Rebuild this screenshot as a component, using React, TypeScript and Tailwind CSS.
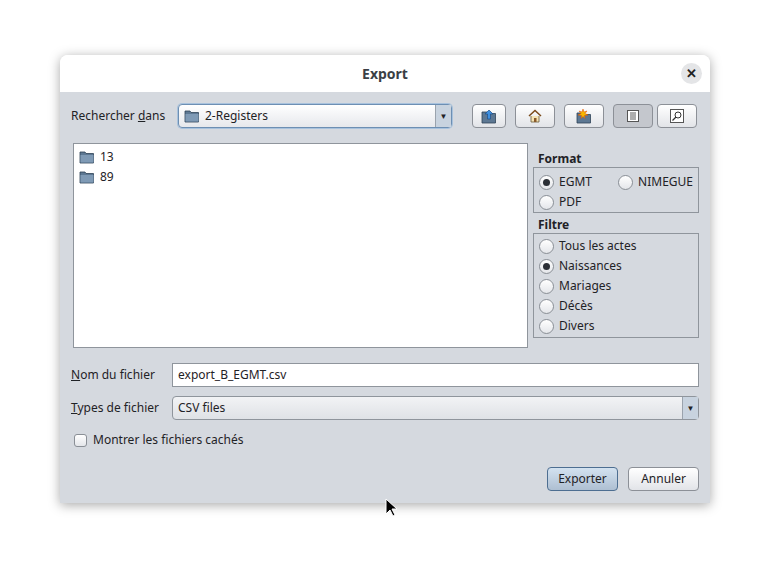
import React from "react";

const Folder = () => (
  <svg width="16" height="14" viewBox="0 0 16 14">
    <path d="M1 2h5l1 1.5h7.5v9.5H1z" fill="#5d7893" stroke="#2f4257" strokeWidth="0.8" />
    <path d="M1.5 5h13v7.5h-13z" fill="#7f9ab5" />
  </svg>
);

const Radio = ({ on }: { on?: boolean }) => (
  <span className="w-[15px] h-[15px] rounded-full border border-[#8a8f96] bg-gradient-to-b from-white to-[#e4e6ea] flex items-center justify-center shrink-0">
    {on && <span className="w-[7px] h-[7px] rounded-full bg-[#2b2f36]" />}
  </span>
);

const TB = ({ children, active }: { children: React.ReactNode; active?: boolean }) => (
  <div className={`h-[24px] rounded-[4px] border border-[#8c9097] flex items-center justify-center ${active ? "bg-[#c4c7cd]" : "bg-gradient-to-b from-white to-[#e2e4e8]"}`}>{children}</div>
);

export default function App() {
  return (
    <div className="w-[771px] h-[571px] bg-white relative" style={{ fontFamily: '"Noto Sans", sans-serif' }}>
      <div className="absolute left-[60px] top-[55px] w-[650px] h-[448px] rounded-t-[8px] overflow-hidden shadow-[0_2px_12px_rgba(0,0,0,0.35)] flex flex-col">
        <div className="h-[37px] bg-white flex items-center justify-center relative shrink-0">
          <span className="text-[14px] font-bold text-[#3b3f45]">Export</span>
          <span className="absolute right-[8px] top-[8px] w-[21px] h-[21px] rounded-full bg-[#e4e5e7] flex items-center justify-center text-[13px] font-bold text-[#222]">✕</span>
        </div>
        <div className="flex-1 bg-[#d5d9df] px-[11px] pt-[12px] text-[12px] text-[#1f2226]">
          <div className="flex items-center h-[24px]">
            <span className="w-[107px]">Rechercher <u>d</u>ans</span>
            <div className="w-[274px] h-[24px] rounded-[4px] border border-[#6d8fb3] bg-gradient-to-b from-white to-[#e6e8ec] flex items-center pl-[5px] shadow-[0_0_0_1px_#a8c2dd]">
              <Folder />
              <span className="ml-[5px] flex-1">2-Registers</span>
              <span className="w-[16px] h-full border-l border-[#9aa3ad] bg-[#c8d3df] flex items-center justify-center text-[8px]">▼</span>
            </div>
            <div className="ml-[20px] flex gap-[9px]">
              <div className="w-[34px]"><TB><svg width="16" height="16" viewBox="0 0 16 16"><path d="M1 4h5l1 1.5h7.5V15H1z" fill="#5d7893" stroke="#2f4257" strokeWidth="0.8"/><path d="M8 2l4 4H9.5v5h-3V6H4z" fill="#3d8fe0" stroke="#1e4f86" strokeWidth="0.7"/></svg></TB></div>
              <div className="w-[40px]"><TB><svg width="16" height="16" viewBox="0 0 16 16"><path d="M2 8L8 2.5 14 8" fill="none" stroke="#7a4a1a" strokeWidth="1.5"/><path d="M4 8v6h8V8" fill="#f4e3b5" stroke="#6b5a3a" strokeWidth="0.8"/><rect x="7" y="10" width="2.5" height="4" fill="#8a5a2a"/></svg></TB></div>
              <div className="w-[40px]"><TB><svg width="16" height="16" viewBox="0 0 16 16"><path d="M1 5h5l1 1.5h7.5V15H1z" fill="#5d7893" stroke="#2f4257" strokeWidth="0.8"/><path d="M7 1l1 3 3-1-2 2.5 3 1.5-3.5.5.5 3-2-2-2 2 .5-3L2 7l3-1.5L3 3l3 1z" fill="#f5b800" stroke="#e04a00" strokeWidth="0.5"/></svg></TB></div>
              <div className="w-[40px]"><TB active><svg width="12" height="12" viewBox="0 0 12 12"><rect x="0.5" y="0.5" width="11" height="11" fill="#fff" stroke="#555"/><path d="M3 3h6M3 5h6M3 7h6M3 9h6" stroke="#333" strokeWidth="0.8"/></svg></TB></div>
              <div className="w-[40px] -ml-[5px]"><TB><svg width="14" height="14" viewBox="0 0 14 14"><rect x="0.5" y="0.5" width="13" height="13" fill="#fff" stroke="#555"/><circle cx="8" cy="6" r="3" fill="none" stroke="#333"/><path d="M6 8l-3.5 3.5" stroke="#333" strokeWidth="1.3"/></svg></TB></div>
            </div>
          </div>
          <div className="flex mt-[15px] gap-[5px]">
            <div className="w-[455px] h-[205px] ml-[2px] bg-white border border-[#8f959c] py-[3px] px-[5px]">
              <div className="flex items-center gap-[5px] h-[20px]"><Folder /><span>13</span></div>
              <div className="flex items-center gap-[5px] h-[20px]"><Folder /><span>89</span></div>
            </div>
            <div className="w-[166px] flex flex-col">
              <div className="font-bold text-[12px] pl-[5px] mt-[7px] h-[17px]">Format</div>
              <div className="border border-[#8f959c] h-[46px] px-[5px] pt-[4px]">
                <div className="flex items-center h-[20px]">
                  <Radio on /><span className="ml-[5px] w-[62px]">EGMT</span><Radio /><span className="ml-[5px]">NIMEGUE</span>
                </div>
                <div className="flex items-center h-[20px]"><Radio /><span className="ml-[5px]">PDF</span></div>
              </div>
              <div className="font-bold text-[12px] pl-[5px] mt-[3px] h-[17px]">Filtre</div>
              <div className="border border-[#8f959c] h-[105px] px-[5px] pt-[2px]">
                {["Tous les actes", "Naissances", "Mariages", "Décès", "Divers"].map((t, i) => (
                  <div key={t} className="flex items-center h-[20px]"><Radio on={i === 1} /><span className="ml-[5px]">{t}</span></div>
                ))}
              </div>
            </div>
          </div>
          <div className="flex items-center mt-[15px] h-[24px]">
            <span className="w-[101px]"><u>N</u>om du fichier</span>
            <div className="flex-1 h-[24px] bg-white border border-[#8f959c] flex items-center px-[5px]">export_B_EGMT.csv</div>
          </div>
          <div className="flex items-center mt-[9px] h-[24px]">
            <span className="w-[101px]"><u>T</u>ypes de fichier</span>
            <div className="flex-1 h-[24px] rounded-[4px] border border-[#8f959c] bg-gradient-to-b from-[#f2f3f5] to-[#dfe2e6] flex items-center pl-[5px]">
              <span className="flex-1">CSV files</span>
              <span className="w-[16px] h-full border-l border-[#9aa3ad] bg-[#c8d3df] flex items-center justify-center text-[8px]">▼</span>
            </div>
          </div>
          <div className="flex items-center mt-[10px] h-[20px] ml-[3px]">
            <span className="w-[13px] h-[13px] rounded-[3px] border border-[#8a8f96] bg-gradient-to-b from-white to-[#e4e6ea]" />
            <span className="ml-[6px]">Montrer les fichiers cachés</span>
          </div>
          <div className="flex justify-end gap-[10px] mt-[17px]">
            <div className="w-[71px] h-[24px] rounded-[4px] border border-[#4d6e91] bg-gradient-to-b from-[#d3e2f0] to-[#aebfd2] flex items-center justify-center">Exporter</div>
            <div className="w-[71px] h-[24px] rounded-[4px] border border-[#8c9097] bg-gradient-to-b from-white to-[#e2e4e8] flex items-center justify-center">Annuler</div>
          </div>
        </div>
      </div>
      <svg className="absolute left-[385px] top-[498px]" width="12" height="19" viewBox="0 0 12 19"><path d="M1 1v15l4-4 3 6 2-1-3-6h5z" fill="#000" stroke="#fff" strokeWidth="1"/></svg>
    </div>
  );
}
